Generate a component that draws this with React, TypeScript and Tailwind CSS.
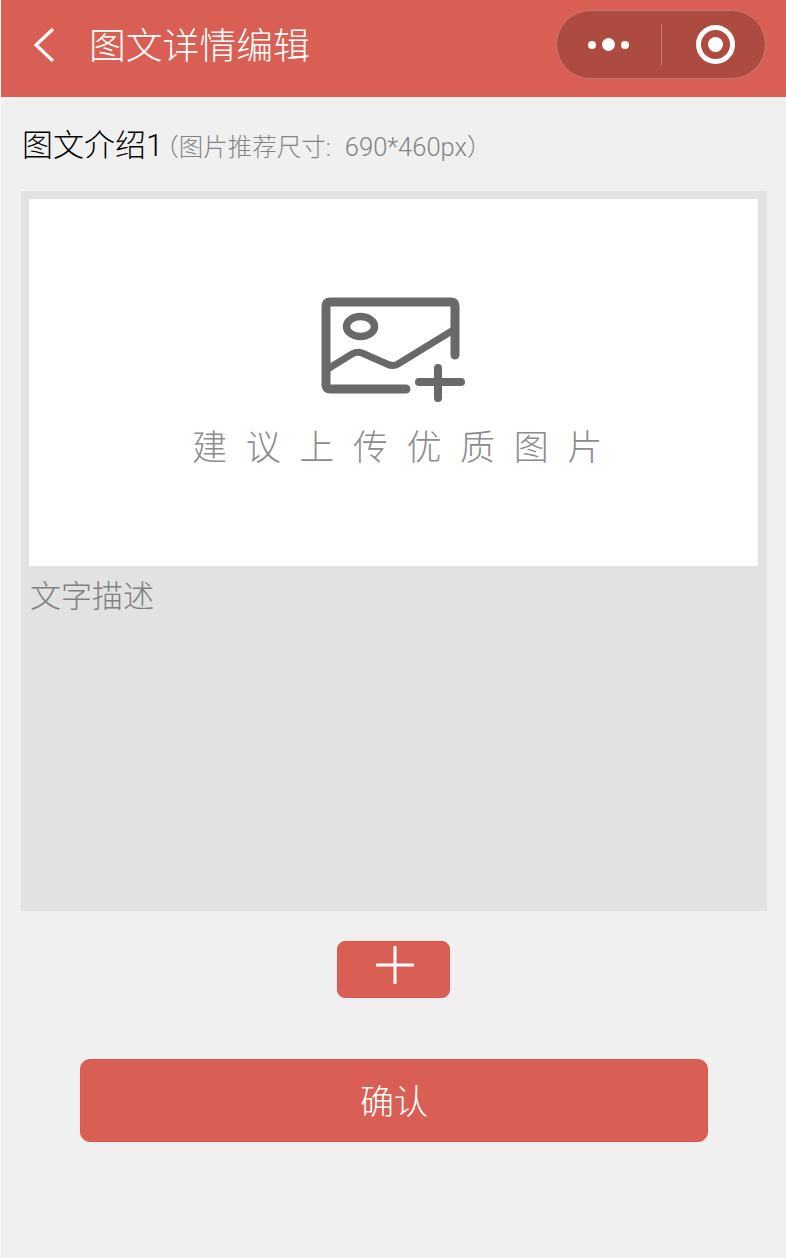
const cjk = "font-['Roboto','Noto_Sans_CJK_SC',sans-serif]";

function Header() {
  return (
    <header className="flex h-[97px] items-start bg-[#d95f54]">
      <svg className="ml-[32px] mt-[27px] h-[36px] w-[22px]" viewBox="0 0 22 36" fill="none">
        <path d="M20 2 L3 18 L20 34" stroke="#fff" strokeWidth="3.2" />
      </svg>
      <h1 className="ml-[34px] mt-[24px] text-[36.8px] leading-[46px] font-light text-white">图文详情编辑</h1>
      <div className="ml-auto mr-[20px] mt-[10px] flex h-[69px] w-[210px] items-center rounded-full border border-[#c8786f] bg-[#ad4b41]">
        <div className="flex w-[104px] items-center justify-center gap-[6px] pr-[2px]">
          <span className="h-[8px] w-[8px] rounded-full bg-white" />
          <span className="h-[13px] w-[13px] rounded-full bg-white" />
          <span className="h-[8px] w-[8px] rounded-full bg-white" />
        </div>
        <div className="h-[41px] w-px bg-[#c8786f]" />
        <div className="flex flex-1 items-center justify-center pl-[4px]">
          <div className="flex h-[39px] w-[39px] items-center justify-center rounded-full border-[5px] border-white">
            <span className="h-[15px] w-[15px] rounded-full bg-white" />
          </div>
        </div>
      </div>
    </header>
  );
}

function ImageAddIcon() {
  return (
    <svg className="ml-[3px] h-[110px] w-[150px] blur-[0.5px]" viewBox="0 0 150 110" fill="none" stroke="#696969" strokeLinecap="round" strokeLinejoin="round">
      <path d="M135 59 V10 Q135 6 131 6 H10 Q6 6 6 10 V89 Q6 93 10 93 H86" strokeWidth="9" />
      <path d="M135 33 L78 68 Q73 71 67 68 L42 57 Q37 55 32 58 L6 74" strokeWidth="7" />
      <ellipse cx="40.5" cy="30.5" rx="14" ry="10" strokeWidth="7.5" />
      <path d="M99 86 H141 M118 72 V102" strokeWidth="8" />
    </svg>
  );
}

export default function App() {
  return (
    <div className={`${cjk} min-h-[1258px] border-l border-[#f7f7f7] bg-[#f0f0f0]`}>
      <Header />
      <main className="pl-[20px] pr-[19px]">
        <div className="flex h-[94px] items-start pl-px pt-[28px]">
          <span className="text-[31px] leading-[42px] font-light text-black">图文介绍1</span>
          <span className="ml-[-9px] mt-[2px] text-[24.5px] leading-[40px] font-light text-[#848484]">（图片推荐尺寸:<span className="ml-[14px] text-[25.5px]">690*460px</span>）</span>
        </div>
        <section className="h-[720px] bg-[#e2e2e2] px-[8px] pt-[8px]">
          <div className="flex h-[367px] w-[729px] flex-col items-center bg-white pt-[97px]">
            <ImageAddIcon />
            <p className="ml-[26px] mt-[18px] text-[35px] leading-[50px] font-light tracking-[18.6px] text-[#8c8c8c]">建议上传优质图片</p>
          </div>
          <p className="pl-px pt-[9px] text-[31px] leading-[44px] font-light text-[#808080]">文字描述</p>
        </section>
        <div className="flex justify-center pr-[2px] pt-[30px]">
          <button className="flex h-[57px] w-[113px] items-center justify-center rounded-[8px] border border-[#e0564c] bg-[#d95f54] pb-[10px] pl-[3px]">
            <svg className="h-[38px] w-[38px]" viewBox="0 0 38 38" fill="none">
              <path d="M1 19 H37 M19 1 V37" stroke="#fff" strokeWidth="3" strokeLinecap="round" />
            </svg>
          </button>
        </div>
        <div className="flex justify-center pt-[61px]">
          <button className="h-[83px] w-[628px] rounded-[10px] border border-[#e0564c] bg-[#d95f54] pt-[4px] text-[34px] font-light text-white">确认</button>
        </div>
      </main>
    </div>
  );
}
